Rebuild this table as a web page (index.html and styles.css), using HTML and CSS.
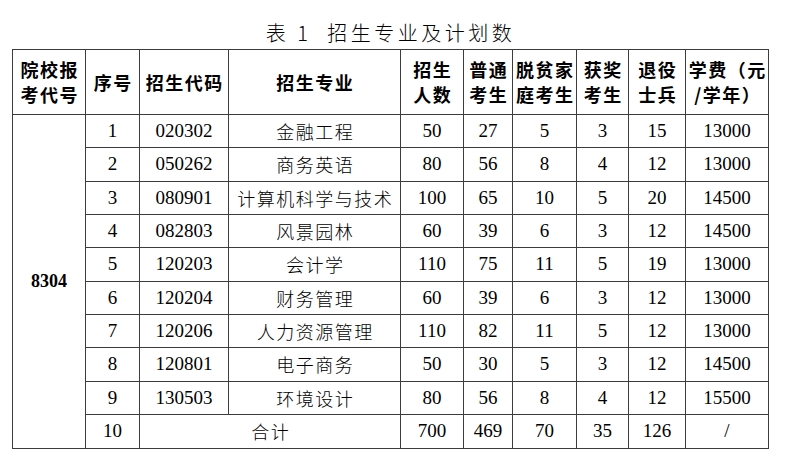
FILE: index.html
```html
<!DOCTYPE html>
<html lang="zh-CN">
<head>
<meta charset="utf-8">
<title>表1 招生专业及计划数</title>
<link rel="stylesheet" href="styles.css">
</head>
<body>
<div class="page">
  <div class="title">表 1&nbsp; 招生专业及计划数</div>
  <table class="plan">
    <colgroup>
      <col class="c1"><col class="c2"><col class="c3"><col class="c4"><col class="c5">
      <col class="c6"><col class="c7"><col class="c8"><col class="c9"><col class="c10">
    </colgroup>
    <thead>
      <tr class="head">
        <th>院校报<br>考代号</th>
        <th>序号</th>
        <th>招生代码</th>
        <th>招生专业</th>
        <th>招生<br>人数</th>
        <th>普通<br>考生</th>
        <th>脱贫家<br>庭考生</th>
        <th>获奖<br>考生</th>
        <th>退役<br>士兵</th>
        <th>学费（元<br>/学年）</th>
      </tr>
    </thead>
    <tbody>
      <tr><td rowspan="10" class="code">8304</td><td>1</td><td>020302</td><td class="zh">金融工程</td><td>50</td><td>27</td><td>5</td><td>3</td><td>15</td><td>13000</td></tr>
      <tr><td>2</td><td>050262</td><td class="zh">商务英语</td><td>80</td><td>56</td><td>8</td><td>4</td><td>12</td><td>13000</td></tr>
      <tr><td>3</td><td>080901</td><td class="zh">计算机科学与技术</td><td>100</td><td>65</td><td>10</td><td>5</td><td>20</td><td>14500</td></tr>
      <tr><td>4</td><td>082803</td><td class="zh">风景园林</td><td>60</td><td>39</td><td>6</td><td>3</td><td>12</td><td>14500</td></tr>
      <tr><td>5</td><td>120203</td><td class="zh">会计学</td><td>110</td><td>75</td><td>11</td><td>5</td><td>19</td><td>13000</td></tr>
      <tr><td>6</td><td>120204</td><td class="zh">财务管理</td><td>60</td><td>39</td><td>6</td><td>3</td><td>12</td><td>13000</td></tr>
      <tr><td>7</td><td>120206</td><td class="zh">人力资源管理</td><td>110</td><td>82</td><td>11</td><td>5</td><td>12</td><td>13000</td></tr>
      <tr><td>8</td><td>120801</td><td class="zh">电子商务</td><td>50</td><td>30</td><td>5</td><td>3</td><td>12</td><td>14500</td></tr>
      <tr><td>9</td><td>130503</td><td class="zh">环境设计</td><td>80</td><td>56</td><td>8</td><td>4</td><td>12</td><td>15500</td></tr>
      <tr class="last"><td>10</td><td colspan="2" class="zh">合计</td><td>700</td><td>469</td><td>70</td><td>35</td><td>126</td><td>/</td></tr>
    </tbody>
  </table>
</div>
</body>
</html>
```

FILE: styles.css
```css
html, body {
  margin: 0;
  padding: 0;
  background: #ffffff;
}

.page {
  padding-left: 12px;
  width: 757px;
  font-family: "Liberation Serif", "Noto Sans CJK SC", serif;
  color: #000;
}

.title {
  height: 45px;
  box-sizing: border-box;
  padding-top: 21px;
  margin-bottom: 4px;
  font-family: "Noto Sans CJK SC", sans-serif;
  font-weight: 300;
  font-size: 20px;
  line-height: 24px;
  letter-spacing: 3.5px;
  text-align: center;
}

.plan {
  width: 757px;
  table-layout: fixed;
  border-collapse: collapse;
}

.c1 { width: 73px; }
.c2 { width: 54px; }
.c3 { width: 89px; }
.c4 { width: 172px; }
.c5 { width: 63px; }
.c6 { width: 49px; }
.c7 { width: 64px; }
.c8 { width: 52px; }
.c9 { width: 57px; }
.c10 { width: 83px; }

.plan th,
.plan td {
  border: 1px solid #3c3c3c;
  padding: 0;
  text-align: center;
  vertical-align: middle;
  overflow: hidden;
  white-space: nowrap;
}

.head th {
  height: 64px;
  font-family: "Noto Sans CJK SC", sans-serif;
  font-weight: 600;
  font-size: 18px;
  line-height: 25px;
  letter-spacing: 1.5px;
  padding-left: 1.5px;
}

.plan td {
  height: 32.33px;
  font-size: 19px;
  line-height: 22px;
}

.plan tr.last td {
  height: 33px;
}

.plan td.zh {
  font-family: "Noto Sans CJK SC", sans-serif;
  font-weight: 300;
  font-size: 18px;
  letter-spacing: 1.5px;
  padding-left: 1.5px;
}

.plan td.code {
  font-weight: bold;
  font-size: 18px;
}
```
